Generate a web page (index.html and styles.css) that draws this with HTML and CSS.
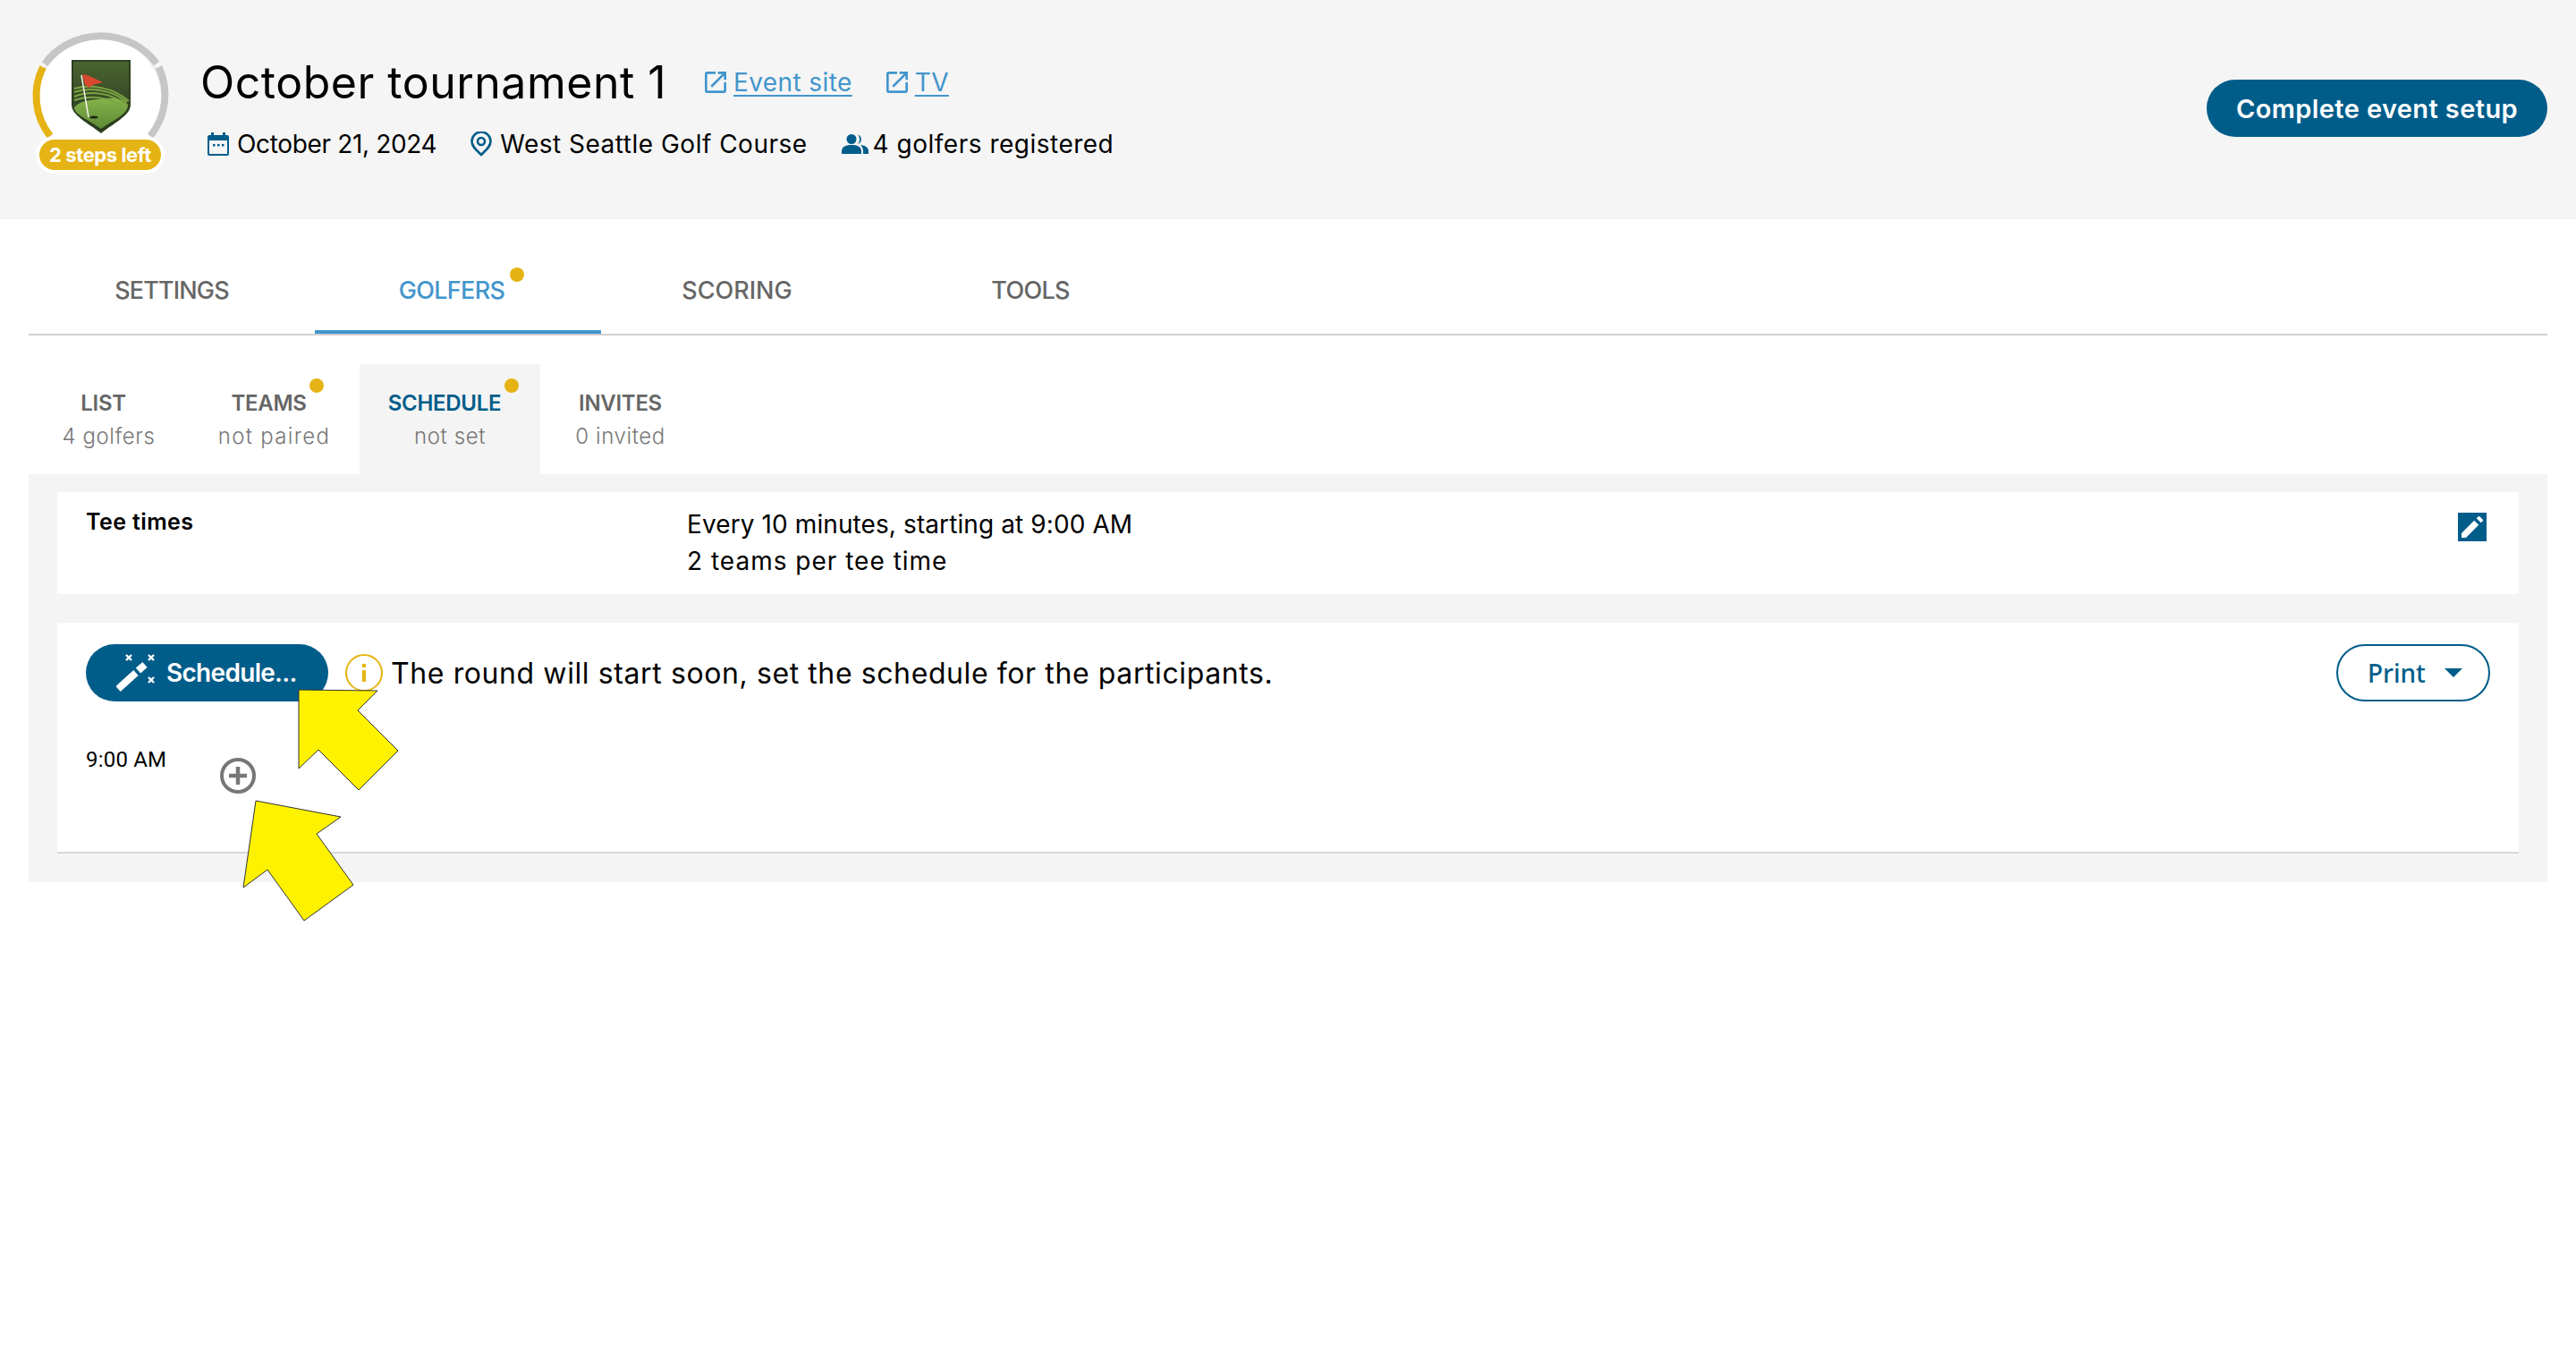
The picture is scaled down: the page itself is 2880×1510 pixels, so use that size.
FILE: index.html
```html
<!DOCTYPE html>
<html lang="en">
<head>
<meta charset="utf-8">
<title>October tournament 1</title>
<link rel="stylesheet" href="styles.css">
</head>
<body>
<header class="event-header">
  <div class="logo">
    <svg class="logo-ring" viewBox="0 0 160 160" width="160" height="160">
      <circle cx="80" cy="80" r="70" fill="#fff" stroke="#eeeeee" stroke-width="4"/>
      <path d="M18 41.500A76 72 0 0 1 143 41" fill="none" stroke="#c6c6c6" stroke-width="8"/>
      <path d="M145.500 45A72.500 72.500 0 0 1 136 122" fill="none" stroke="#c6c6c6" stroke-width="8"/>
      <path d="M16 45A72.500 72.500 0 0 0 24 122" fill="none" stroke="#e5b414" stroke-width="8"/>
    </svg>
    <svg class="logo-shield" viewBox="0 0 66 82" width="66" height="82">
      <defs>
        <linearGradient id="sky" x1="0" y1="0" x2="0" y2="1"><stop offset="0" stop-color="#4a6431"/><stop offset="1" stop-color="#26351c"/></linearGradient>
        <linearGradient id="turf" x1="0" y1="0" x2="0" y2="1"><stop offset="0" stop-color="#86b34a"/><stop offset="1" stop-color="#5d8a35"/></linearGradient>
      </defs>
      <path d="M0 0H66V50C66 62 48 70 33 82C18 70 0 62 0 50Z" fill="#2d3f20"/>
      <path d="M2 2H64V50C64 61 47 68 33 79C19 68 2 61 2 50Z" fill="url(#sky)"/>
      <path d="M3 53C3 61 19 67 33 77C47 67 63 61 63 50C56 41 44 42 28 44C17 45 8 47 3 53Z" fill="url(#turf)"/>
      <path d="M3 41C20 34 42 36 62 50M3 45C20 39 40 41 58 52M3 36C20 30 44 33 62 47" fill="none" stroke="#7ba543" stroke-width="2"/>
      <path d="M3 32C20 27 46 30 64 46" fill="none" stroke="#7ba543" stroke-width="2"/>
      <path d="M11 17L19 64" stroke="#f1f1e8" stroke-width="1.500"/>
      <path d="M12 16C18 16 24 20 35 25C29 27 23 27 20 31L15 28Z" fill="#d9482d"/>
      <ellipse cx="25" cy="64" rx="4.500" ry="1.600" fill="#1c2613"/>
    </svg>
    <span class="logo-badge">2 steps left</span>
  </div>
  <div class="event-info">
    <div class="title-row">
      <h1 class="event-title">October tournament 1</h1>
      <a class="ext-link" href="#">
        <svg class="ext-icon" viewBox="3 3 18 18"><path d="M19 19H5V5h7V3H5a2 2 0 0 0-2 2v14a2 2 0 0 0 2 2h14c1.100 0 2-.9 2-2v-7h-2v7zM14 3v2h3.590l-9.830 9.830 1.410 1.410L19 6.410V10h2V3h-7z"/></svg><span class="ext-text">Event site</span>
      </a>
      <a class="ext-link" href="#">
        <svg class="ext-icon" viewBox="3 3 18 18"><path d="M19 19H5V5h7V3H5a2 2 0 0 0-2 2v14a2 2 0 0 0 2 2h14c1.100 0 2-.9 2-2v-7h-2v7zM14 3v2h3.590l-9.830 9.830 1.410 1.410L19 6.410V10h2V3h-7z"/></svg><span class="ext-text">TV</span>
      </a>
    </div>
    <div class="meta-row">
      <span class="meta-item">
        <svg class="meta-icon" viewBox="0 0 24 26" width="24" height="26"><path d="M4 0h3v3h10V0h3v3h2a2 2 0 0 1 2 2v19a2 2 0 0 1-2 2H2a2 2 0 0 1-2-2V5a2 2 0 0 1 2-2h2z" fill="#005d8a"/><rect x="2" y="9" width="20" height="15" fill="#f5f5f5"/><rect x="6" y="13" width="2.500" height="2.500" fill="#005d8a"/><rect x="11" y="13" width="2.500" height="2.500" fill="#005d8a"/><rect x="16" y="13" width="2.500" height="2.500" fill="#005d8a"/></svg>
        <span class="meta-date">October 21, 2024</span>
      </span>
      <span class="meta-item">
        <svg class="meta-icon" viewBox="0 0 24 28" width="24" height="28"><path d="M12 26C7 21 1.500 17 1.500 11a10.500 10.500 0 0 1 21 0C22.500 17 17 21 12 26Z" fill="none" stroke="#005d8a" stroke-width="2.600"/><circle cx="12" cy="11" r="4" fill="none" stroke="#005d8a" stroke-width="2.600"/></svg>
        <span class="meta-text">West Seattle Golf Course</span>
      </span>
      <span class="meta-item meta-tight">
        <svg class="meta-icon" viewBox="0 0 30 22" width="30" height="22"><circle cx="11" cy="5.500" r="5.500" fill="#005d8a"/><path d="M0 22v-3c0-4.500 4-7 11-7s11 2.500 11 7v3z" fill="#005d8a"/><path d="M18 0.500a5.500 5.500 0 0 1 0 10.500c1.500-1.500 2-3.500 2-5.200s-.6-3.800-2-5.300z" fill="#005d8a"/><path d="M21 12c5 .5 9 2.800 9 7v3h-6v-3c0-2.800-1-5-3-7z" fill="#005d8a"/></svg>
        <span class="meta-text">4 golfers registered</span>
      </span>
    </div>
  </div>
  <button class="btn btn-complete">Complete event setup</button>
</header>

<main class="content">
  <nav class="tabs">
    <a class="tab tab-settings">SETTINGS</a>
    <a class="tab tab-golfers tab-active">GOLFERS<i class="dot dot-golfers"></i></a>
    <a class="tab tab-scoring">SCORING</a>
    <a class="tab tab-tools">TOOLS</a>
  </nav>

  <nav class="subtabs">
    <a class="subtab sub-list"><b class="sub-label sub-shift">LIST</b><span class="sub-note">4 golfers</span></a>
    <a class="subtab sub-teams"><b class="sub-label sub-shift">TEAMS</b><span class="sub-note">not paired</span><i class="dot dot-teams"></i></a>
    <a class="subtab sub-schedule sub-active"><b class="sub-label sub-shift">SCHEDULE</b><span class="sub-note">not set</span><i class="dot dot-schedule"></i></a>
    <a class="subtab sub-invites"><b class="sub-label">INVITES</b><span class="sub-note">0 invited</span></a>
  </nav>

  <section class="panel">
    <div class="card tee-card">
      <div class="tee-label">Tee times</div>
      <div class="tee-values">
        <div class="tee-line-num">Every 10 minutes, starting at 9:00 AM</div>
        <div class="tee-line-text">2 teams per tee time</div>
      </div>
      <span class="edit-btn">
        <svg viewBox="0 0 24 24" width="32" height="32"><path d="M3 17.250V21h3.750L17.400 10.350l-3.750-3.750L3 17.250zM20.710 7.040a1 1 0 0 0 0-1.410l-2.340-2.340a1 1 0 0 0-1.410 0l-1.430 1.430 3.750 3.750 1.430-1.430z" fill="#fff"/></svg>
      </span>
    </div>

    <div class="card schedule-card">
      <div class="toolbar">
        <button class="btn btn-schedule">
          <svg viewBox="0 0 46 46" width="46" height="46"><path d="M2 41L22 23" stroke="#fff" stroke-width="8"/><path d="M24.500 20.500L32 14" stroke="#fff" stroke-width="8"/><path d="M11 3l6 6m0-6l-6 6M36 3l6 6m0-6l-6 6M36 28l6 6m0-6l-6 6" stroke="#fff" stroke-width="2.400" fill="none"/></svg>
          <span>Schedule...</span>
        </button>
        <svg class="info-icon" viewBox="0 0 42 42" width="42" height="42"><circle cx="21" cy="21" r="20" fill="none" stroke="#e5b414" stroke-width="2"/><rect x="19" y="11" width="4" height="4" fill="#e5b414"/><rect x="19" y="18" width="4" height="13" fill="#e5b414"/></svg>
        <span class="notice">The round will start soon, set the schedule for the participants.</span>
        <button class="btn-print"><span>Print</span><i class="caret"></i></button>
      </div>
      <div class="slot-row">
        <span class="slot-time">9:00 AM</span>
        <svg class="slot-add" viewBox="0 0 40 40" width="40" height="40"><circle cx="20" cy="20" r="18" fill="none" stroke="#777" stroke-width="4"/><path d="M20 10v20M10 20h20" stroke="#777" stroke-width="4.500"/></svg>
      </div>
    </div>
  </section>
</main>

<svg class="callouts" viewBox="0 0 2880 1510" width="2880" height="1510">
  <polygon points="334,771 422,772 400,794 445,839 401,883 356,838 334,859" fill="#fff200" stroke="#333" stroke-width="1"/>
  <polygon points="286,895 381,913 354,932 395,989 340,1029 299,972 272,992" fill="#fff200" stroke="#333" stroke-width="1"/>
</svg>
</body>
</html>
```
FILE: styles.css
```css
* { box-sizing: border-box; }
html, body { margin: 0; padding: 0; }
body {
  position: relative;
  height: 1510px;
  overflow: hidden;
  background: #fff;
  color: #000;
  font-family: Inter, "Liberation Sans", sans-serif;
}
a { color: inherit; text-decoration: none; }
button { font-family: inherit; cursor: pointer; }

.event-header {
  height: 245px;
  background: #f5f5f5;
  display: flex;
  align-items: center;
  padding: 0 32px;
}
.logo {
  position: relative;
  width: 160px;
  height: 160px;
  flex: none;
  margin-bottom: 25px;
}
.logo-ring { display: block; }
.logo-shield { position: absolute; left: 48px; top: 37px; }
.logo-badge {
  position: absolute;
  left: 8px;
  top: 122px;
  width: 144px;
  height: 42px;
  border: 4px solid #fff;
  border-radius: 21px;
  background: #e5b414;
  color: #fff;
  font-size: 22px;
  font-weight: 700;
  letter-spacing: -0.4px;
  line-height: 34px;
  text-align: center;
}
.event-info {
  margin-left: 32px;
  margin-top: 2px;
  display: flex;
  flex-direction: column;
  gap: 30px;
}
.title-row { display: flex; align-items: center; height: 44px; }
.event-title {
  margin: 0;
  width: 564px;
  font-size: 50px;
  font-weight: 400;
  letter-spacing: 0.5px;
  white-space: nowrap;
}
.ext-link {
  display: inline-flex;
  align-items: center;
  gap: 8px;
  margin-right: 38px;
  color: #4295cc;
  font-size: 28px;
}
.ext-icon { width: 24px; height: 24px; fill: #4295cc; }
.ext-text { text-decoration: underline; text-underline-offset: 4px; letter-spacing: 0.4px; }
.meta-row { display: flex; align-items: center; font-size: 28px; margin-left: 8px; }
.meta-item { display: inline-flex; align-items: center; gap: 9px; margin-right: 38px; }
.meta-tight { gap: 5px; }
.meta-icon { flex: none; }
.meta-date { letter-spacing: -0.35px; }
.meta-text { letter-spacing: 0.5px; }
.btn {
  border: 0;
  border-radius: 32px;
  background: #005d8a;
  color: #fff;
  font-weight: 600;
  height: 64px;
}
.btn-complete {
  margin-left: auto;
  margin-bottom: 3px;
  width: 381px;
  font-size: 29px;
  letter-spacing: 0.4px;
  padding: 0;
}

.content { padding: 0 32px; }
.tabs {
  display: flex;
  margin-top: 36px;
  border-bottom: 2px solid #d0d0d0;
}
.tab {
  position: relative;
  height: 92px;
  padding-bottom: 2px;
  border-bottom: 4px solid transparent;
  display: flex;
  align-items: center;
  justify-content: center;
  color: #666;
  font-size: 27px;
  font-weight: 500;
  letter-spacing: -0.7px;
}
.tab-settings { width: 320px; letter-spacing: -0.85px; }
.tab-golfers { width: 320px; padding-right: 14px; }
.tab-scoring { width: 304px; letter-spacing: 0; }
.tab-tools { width: 352px; }
.tab-active { color: #4295cc; border-bottom-color: #4295cc; }

.dot {
  position: absolute;
  width: 16px;
  height: 16px;
  border-radius: 50%;
  background: #e5b414;
}
.dot-golfers { left: 218px; top: 18px; }
.dot-teams { left: 135px; top: 16px; }
.dot-schedule { left: 162px; top: 16px; }

.subtabs { display: flex; margin-top: 32px; }
.subtab {
  position: relative;
  height: 123px;
  padding-top: 28px;
  display: flex;
  flex-direction: column;
  align-items: center;
  gap: 6px;
}
.sub-list { width: 179px; }
.sub-teams { width: 191px; }
.sub-schedule { width: 202px; }
.sub-invites { width: 179px; }
.sub-active { background: #f4f4f4; }
.sub-active .sub-label { color: #005d8a; }
.sub-label {
  color: #666;
  font-size: 24px;
  font-weight: 600;
  line-height: 32px;
  letter-spacing: -0.3px;
}
.sub-shift { margin-right: 12px; }
.sub-note {
  color: #777;
  font-size: 24px;
  font-weight: 300;
  line-height: 30px;
  letter-spacing: 0.6px;
}
.sub-teams .sub-note { letter-spacing: 1.3px; }

.panel {
  background: #f4f4f4;
  padding: 20px 32px 32px;
  display: flex;
  flex-direction: column;
  gap: 32px;
}
.card { background: #fff; }
.tee-card {
  height: 114px;
  display: flex;
  align-items: flex-start;
  padding: 15px 36px 0 32px;
}
.tee-label { width: 672px; font-size: 25px; font-weight: 600; line-height: 36px; letter-spacing: 0.4px; }
.tee-values { flex: 1; padding-top: 1px; font-size: 28px; line-height: 41px; }
.tee-line-num { letter-spacing: 0.1px; }
.tee-line-text { letter-spacing: 1px; }
.edit-btn { display: block; width: 32px; height: 32px; margin-top: 8px; background: #005d8a; }
.edit-btn svg { display: block; }

.schedule-card {
  height: 258px;
  padding: 24px 32px 0;
  border-bottom: 2px solid #d8d8d8;
}
.toolbar { display: flex; align-items: center; }
.btn-schedule {
  width: 271px;
  padding: 0 0 0 34px;
  display: flex;
  align-items: center;
  gap: 10px;
  font-size: 28px;
  letter-spacing: -0.7px;
  white-space: nowrap;
}
.info-icon { margin-left: 19px; flex: none; }
.notice { margin-left: 9px; font-size: 32px; letter-spacing: 0.6px; white-space: nowrap; }
.btn-print {
  margin-left: auto;
  width: 172px;
  height: 64px;
  padding: 0 0 0 33px;
  display: flex;
  align-items: center;
  border: 2px solid #005d8a;
  border-radius: 32px;
  background: #fff;
  color: #005d8a;
  font-family: "Noto Sans", sans-serif;
  font-size: 28px;
  font-weight: 500;
}
.caret {
  margin-left: 21px;
  width: 0;
  height: 0;
  border-left: 10px solid transparent;
  border-right: 10px solid transparent;
  border-top: 10px solid #005d8a;
}
.slot-row { display: flex; align-items: flex-start; margin-top: 48px; }
.slot-time { font-family: Roboto, sans-serif; font-size: 24px; line-height: 34px; width: 150px; letter-spacing: 0.2px; }
.slot-add { margin-top: 15px; }

.callouts { position: absolute; left: 0; top: 0; pointer-events: none; }
```
